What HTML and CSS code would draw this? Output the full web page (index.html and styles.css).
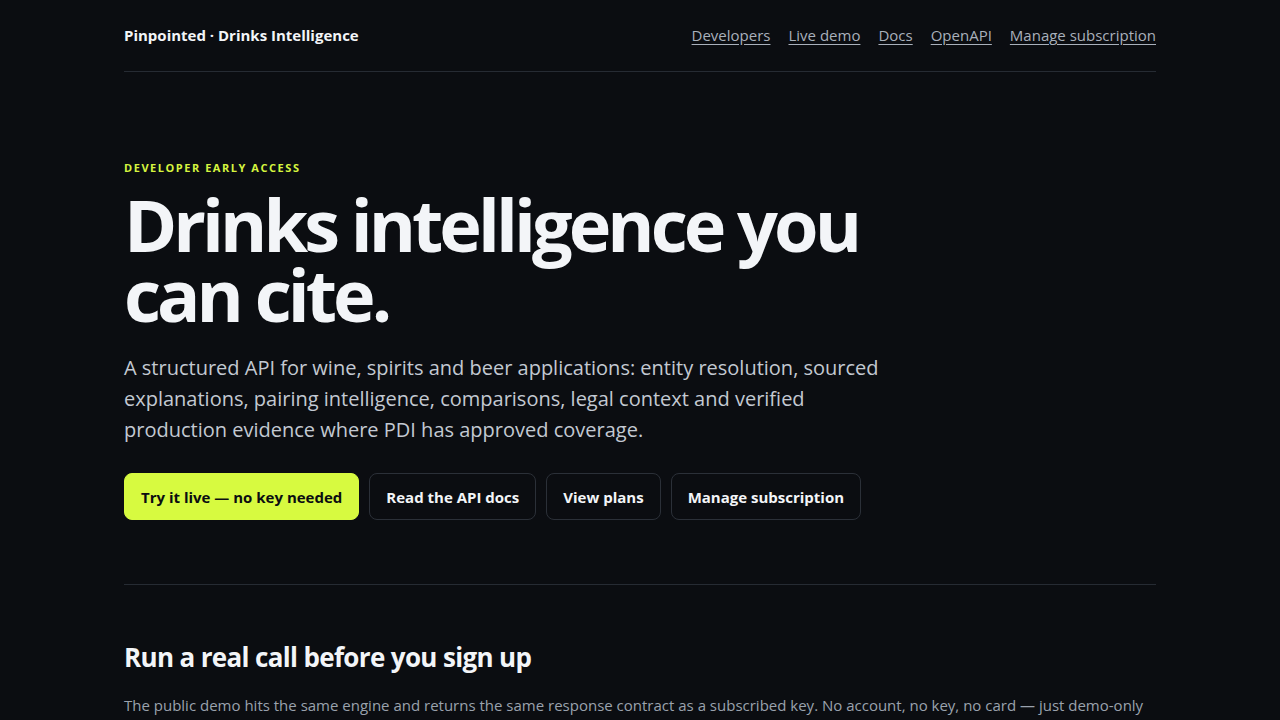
FILE: index.html
```html
<!DOCTYPE html>
<html lang="en">
<head>
<meta charset="utf-8">
<title>Pinpointed · Drinks Intelligence</title>
<link rel="stylesheet" href="styles.css">
</head>
<body>
<div class="wrap">
  <header class="site-header">
    <div class="brand">Pinpointed · Drinks Intelligence</div>
    <nav class="nav">
      <a href="#">Developers</a>
      <a href="#">Live demo</a>
      <a href="#">Docs</a>
      <a href="#">OpenAPI</a>
      <a href="#">Manage subscription</a>
    </nav>
  </header>
  <section class="hero">
    <div class="eyebrow">DEVELOPER EARLY ACCESS</div>
    <h1 class="hero-title">Drinks intelligence you can cite.</h1>
    <p class="lede">A structured API for wine, spirits and beer applications: entity resolution, sourced explanations, pairing intelligence, comparisons, legal context and verified production evidence where PDI has approved coverage.</p>
    <div class="actions">
      <a class="btn btn-primary" href="#">Try it live — no key needed</a>
      <a class="btn" href="#">Read the API docs</a>
      <a class="btn" href="#">View plans</a>
      <a class="btn" href="#">Manage subscription</a>
    </div>
  </section>
  <section class="demo">
    <h2 class="section-title">Run a real call before you sign up</h2>
    <p class="section-text">The public demo hits the same engine and returns the same response contract as a subscribed key. No account, no key, no card — just demo-only sample data.</p>
  </section>
</div>
</body>
</html>
```
FILE: styles.css
```css
* { box-sizing: border-box; }
html, body { margin: 0; padding: 0; }
body {
  background: #0b0d11;
  color: #f3f5f8;
  font-family: "Open Sans", "Noto Sans", sans-serif;
}
.wrap {
  width: 1032px;
  margin: 0 auto;
}
.site-header {
  display: flex;
  justify-content: space-between;
  align-items: center;
  height: 72px;
  border-bottom: 1px solid #262b33;
  padding-bottom: 2px;
}
.brand {
  font-size: 15px;
  font-weight: 700;
  color: #f3f5f8;
}
.nav {
  display: flex;
  gap: 18px;
}
.nav a {
  color: #a9b0bb;
  font-size: 15px;
  text-decoration: underline;
  text-underline-offset: 3px;
}
.hero {
  padding-top: 88px;
  padding-bottom: 64px;
  border-bottom: 1px solid #262b33;
}
.eyebrow {
  color: #d6f53f;
  font-size: 11px;
  font-weight: 700;
  letter-spacing: 0.14em;
  line-height: 16px;
}
.hero-title {
  margin: 13px 0 0;
  font-size: 72px;
  font-weight: 700;
  line-height: 70px;
  letter-spacing: -0.055em;
  max-width: 780px;
  color: #f3f5f8;
}
.lede {
  margin: 23px 0 0;
  font-size: 20px;
  line-height: 31px;
  color: #c3c9d2;
  max-width: 770px;
}
.actions {
  display: flex;
  gap: 10px;
  margin-top: 28px;
}
.btn {
  display: inline-flex;
  align-items: center;
  height: 47px;
  padding: 0 16px;
  border: 1px solid #2b3038;
  border-radius: 8px;
  color: #f3f5f8;
  font-size: 15px;
  font-weight: 700;
  text-decoration: none;
}
.btn-primary {
  background: #d7fa40;
  border-color: #d7fa40;
  color: #0b0d11;
}
.demo {
  padding-top: 54px;
}
.section-title {
  margin: 0;
  font-size: 26px;
  font-weight: 700;
  letter-spacing: -0.025em;
  line-height: 36px;
  color: #f3f5f8;
}
.section-text {
  margin: 18px 0 0;
  font-size: 15px;
  line-height: 24px;
  color: #9aa2ad;
}
```
